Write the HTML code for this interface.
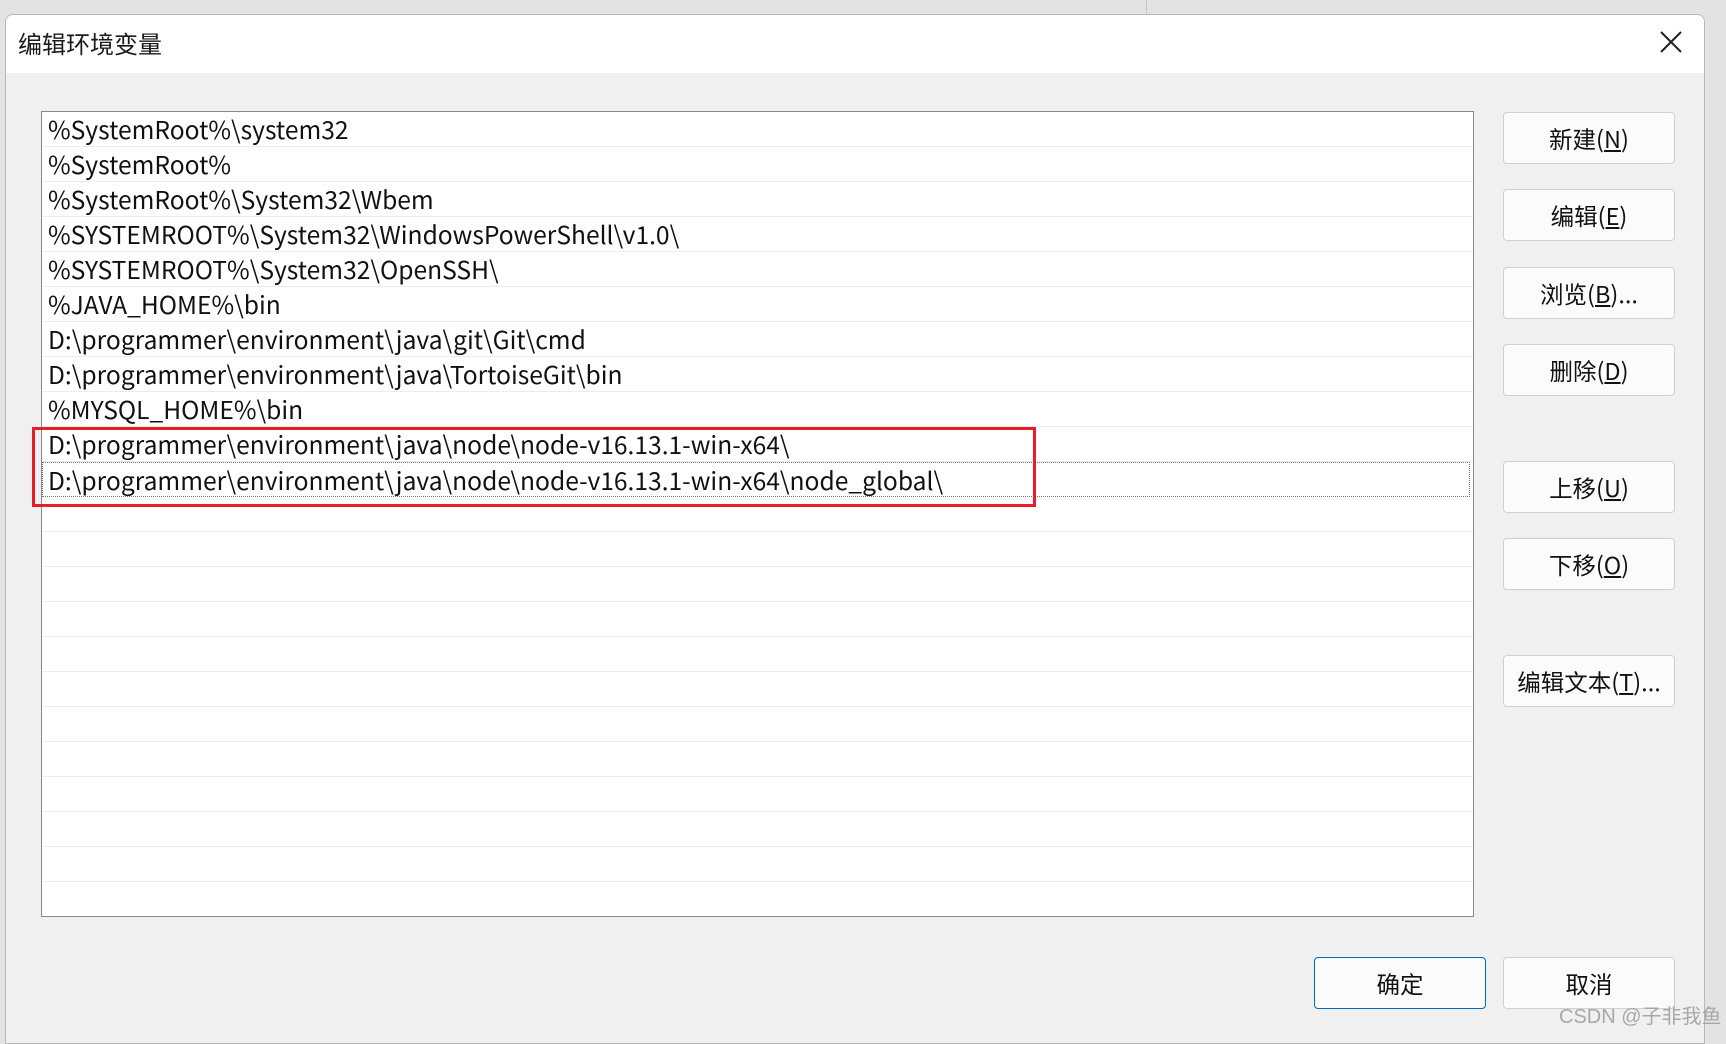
<!DOCTYPE html>
<html><head><meta charset="utf-8"><style>
*{margin:0;padding:0;box-sizing:border-box}
body{width:1726px;height:1032px;background:#e3e3e3;position:relative;overflow:hidden;font-family:"Liberation Sans","Noto Sans CJK SC",sans-serif}
.dlg{position:absolute;left:5px;top:14px;width:1700px;height:1030px;background:#f0f0f0;border:1px solid #b8b8b8;border-radius:8px 8px 0 0;overflow:hidden}
.title{position:absolute;left:0;top:0;width:100%;height:58px;background:#fff}
.title span{position:absolute;left:12px;top:10px;font-size:24px;color:#1a1a1a}
.close{position:absolute;left:1654px;top:16px}
.list{position:absolute;left:35px;top:96px;width:1433px;height:806px;background:#fff;border:1px solid #888}
.row{position:absolute;left:0;width:1431px;height:35px;border-bottom:1px solid #ececec;font-size:24.6px;line-height:34px;padding-left:6px;color:#111;white-space:nowrap;font-family:"Noto Sans CJK SC","Liberation Sans",sans-serif}
.btn{position:absolute;width:172px;height:52px;background:#fbfbfb;border:1px solid #d0d0d0;border-radius:4px;font-size:23.5px;text-align:center;line-height:50px;color:#111;font-family:"Noto Sans CJK SC","Liberation Sans",sans-serif}
.btn u{text-decoration:underline}
.red{position:absolute;left:32px;top:427px;width:1004px;height:80px;border:3px solid #e51e2a}
.wm{position:absolute;left:1560px;top:1001px;font-size:20px;color:#a8a8a8;font-family:"Liberation Sans","Noto Sans CJK SC",sans-serif}
</style></head><body>
<div style="position:absolute;left:1146px;top:0;width:1px;height:14px;background:#c8c8c8"></div>
<div class="dlg">
<div class="title"><span>编辑环境变量</span>
<svg class="close" width="22" height="22" viewBox="0 0 22 22"><path d="M1 1L21 21M21 1L1 21" stroke="#222" stroke-width="2"/></svg></div>
<div class="list">
<div class="row" style="top:0">%SystemRoot%\system32</div>
<div class="row" style="top:35px">%SystemRoot%</div>
<div class="row" style="top:70px">%SystemRoot%\System32\Wbem</div>
<div class="row" style="top:105px">%SYSTEMROOT%\System32\WindowsPowerShell\v1.0\</div>
<div class="row" style="top:140px">%SYSTEMROOT%\System32\OpenSSH\</div>
<div class="row" style="top:175px">%JAVA_HOME%\bin</div>
<div class="row" style="top:210px">D:\programmer\environment\java\git\Git\cmd</div>
<div class="row" style="top:245px">D:\programmer\environment\java\TortoiseGit\bin</div>
<div class="row" style="top:280px">%MYSQL_HOME%\bin</div>
<div class="row" style="top:315px">D:\programmer\environment\java\node\node-v16.13.1-win-x64\</div>
<div class="row" style="top:350px;width:1428px;border:1px dotted #777;padding-left:5px">D:\programmer\environment\java\node\node-v16.13.1-win-x64\node_global\</div>
<div class="row" style="top:385px"></div>
<div class="row" style="top:420px"></div>
<div class="row" style="top:455px"></div>
<div class="row" style="top:490px"></div>
<div class="row" style="top:525px"></div>
<div class="row" style="top:560px"></div>
<div class="row" style="top:595px"></div>
<div class="row" style="top:630px"></div>
<div class="row" style="top:665px"></div>
<div class="row" style="top:700px"></div>
<div class="row" style="top:735px"></div>
</div>
<div class="btn" style="left:1497px;top:97px">新建(<u>N</u>)</div>
<div class="btn" style="left:1497px;top:174px">编辑(<u>E</u>)</div>
<div class="btn" style="left:1497px;top:252px">浏览(<u>B</u>)...</div>
<div class="btn" style="left:1497px;top:329px">删除(<u>D</u>)</div>
<div class="btn" style="left:1497px;top:446px">上移(<u>U</u>)</div>
<div class="btn" style="left:1497px;top:523px">下移(<u>O</u>)</div>
<div class="btn" style="left:1497px;top:640px">编辑文本(<u>T</u>)...</div>
<div class="btn" style="left:1308px;top:942px;border:1px solid #0067c0">确定</div>
<div class="btn" style="left:1497px;top:942px">取消</div>
</div>
<div class="red"></div>
<div class="wm" style="left:1559px;top:1000px">CSDN @子非我鱼</div>
</body></html>
